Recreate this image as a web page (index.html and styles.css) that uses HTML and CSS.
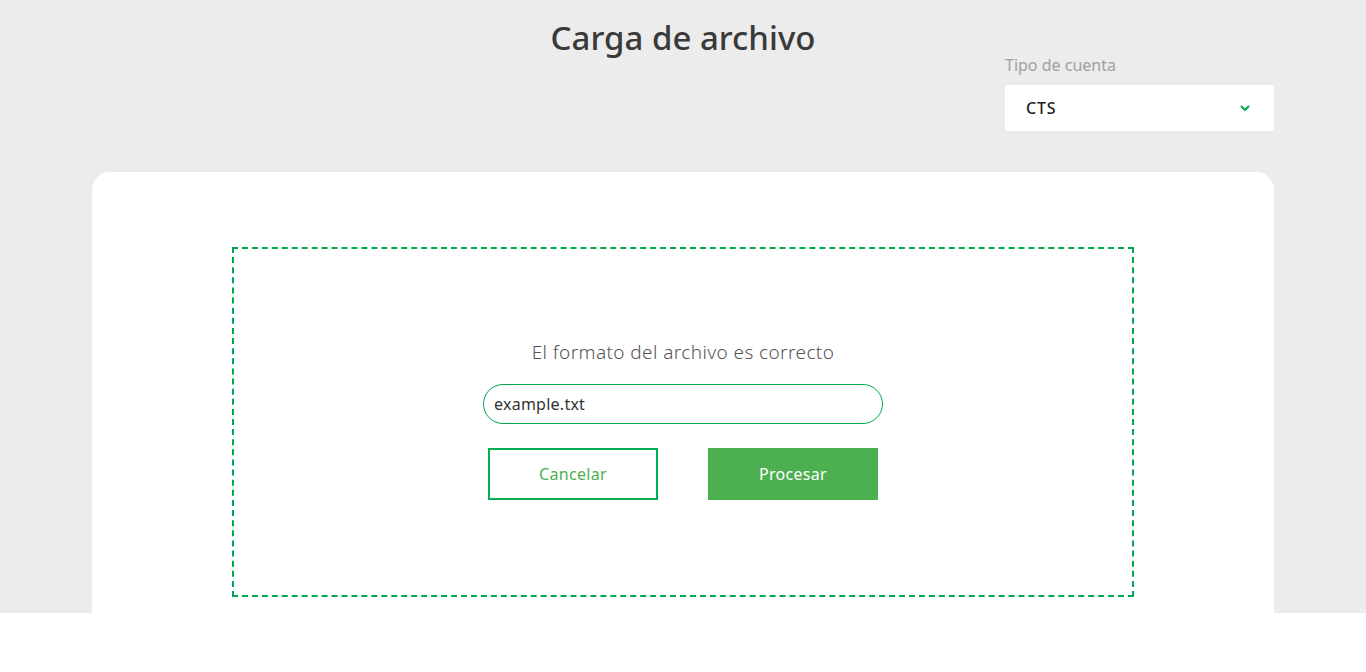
FILE: index.html
```html
<!DOCTYPE html>
<html lang="es">
<head>
<meta charset="utf-8">
<title>Carga de archivo</title>
<link rel="stylesheet" href="styles.css">
</head>
<body>
<div class="page">
  <div class="container">
    <h1 class="title">Carga de archivo</h1>
    <div class="header-row">
      <div class="field">
        <label class="field-label">Tipo de cuenta</label>
        <div class="select">
          <span class="select-value">CTS</span>
          <svg class="chevron" width="10" height="7" viewBox="0 0 10 7"><path d="M1.5 1.5 L5 5 L8.5 1.5" fill="none" stroke="#00a94f" stroke-width="2" stroke-linecap="round" stroke-linejoin="round"/></svg>
        </div>
      </div>
    </div>
    <div class="card">
      <div class="dropzone">
        <p class="message">El formato del archivo es correcto</p>
        <div class="file-input">example.txt</div>
        <div class="actions">
          <button class="btn btn-outline">Cancelar</button>
          <button class="btn btn-primary">Procesar</button>
        </div>
      </div>
    </div>
  </div>
</div>
</body>
</html>
```
FILE: styles.css
```css
* { box-sizing: border-box; }
html, body { margin: 0; padding: 0; background: #ffffff; }
body { font-family: "Noto Sans", "Open Sans", sans-serif; color: #333; }
.page {
  background: #ebeceb;
  height: 613px;
  overflow: hidden;
}
.container {
  width: 1182px;
  margin: 0 auto;
  padding-top: 20px;
}
.title {
  margin: 0;
  text-align: center;
  font-size: 33px;
  line-height: 36px;
  font-weight: 500;
  color: #3a3a3a;
}
.header-row {
  display: flex;
  justify-content: flex-end;
}
.field { width: 269px; }
.field-label {
  display: block;
  font-size: 16px;
  line-height: 18px;
  color: #a0a0a0;
  margin-bottom: 11px;
}
.select {
  height: 46px;
  background: #fff;
  border-radius: 3px;
  display: flex;
  align-items: center;
  justify-content: space-between;
  padding: 0 24px 0 21px;
}
.select-value { font-size: 16px; color: #222; font-weight: 500; letter-spacing: 0.8px; }
.chevron { display: block; }
.card {
  margin-top: 41px;
  background: #fff;
  border-radius: 18px 18px 0 0;
  padding: 75px 140px 80px 140px;
}
.dropzone {
  height: 350px;
  border: 2px dashed #00a94f;
  display: flex;
  flex-direction: column;
  align-items: center;
  justify-content: center;
  padding-bottom: 4px;
}
.message {
  margin: 0 0 20px;
  font-size: 19px;
  line-height: 24px;
  font-weight: 300;
  letter-spacing: 0.4px;
  color: #555;
}
.file-input {
  width: 400px;
  height: 40px;
  border: 1px solid #00a94f;
  border-radius: 20px;
  padding: 0 10px;
  display: flex;
  align-items: center;
  font-size: 16px;
  letter-spacing: 0.25px;
  color: #333;
}
.actions {
  display: flex;
  gap: 50px;
  margin-top: 24px;
}
.btn {
  width: 170px;
  height: 52px;
  font-family: inherit;
  font-size: 16px;
  letter-spacing: 0.3px;
  cursor: pointer;
}
.btn-outline {
  background: #fff;
  border: 2px solid #00b050;
  color: #4caf50;
}
.btn-primary {
  background: #4caf50;
  border: none;
  color: #fff;
}
```
